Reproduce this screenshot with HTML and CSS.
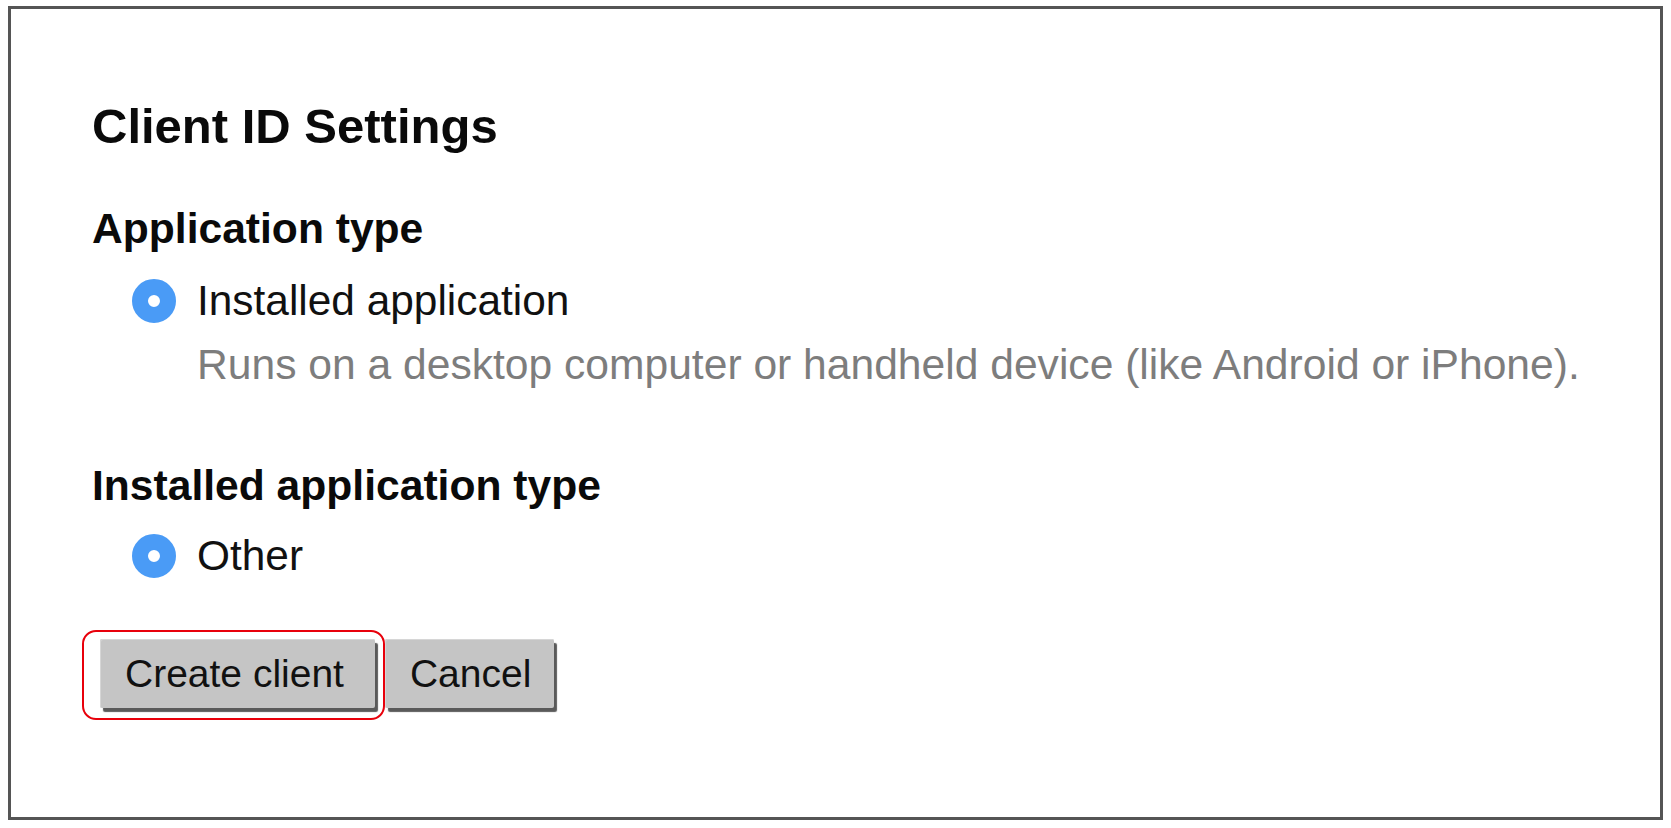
FILE: index.html
```html
<!DOCTYPE html>
<html>
<head>
<meta charset="utf-8">
<link rel="stylesheet" href="styles.css">
</head>
<body>
<div class="frame">
  <h1 class="title">Client ID Settings</h1>
  <h2 class="section">Application type</h2>
  <div class="option">
    <span class="radio"></span>
    <span class="option-label">Installed application</span>
  </div>
  <div class="option-desc">Runs on a desktop computer or handheld device (like Android or iPhone).</div>
  <h2 class="section section-second">Installed application type</h2>
  <div class="option option-other">
    <span class="radio"></span>
    <span class="option-label">Other</span>
  </div>
  <div class="actions">
    <div class="highlight">
      <button class="btn btn-create" type="button">Create client</button>
    </div>
    <button class="btn btn-cancel" type="button">Cancel</button>
  </div>
</div>
</body>
</html>
```

FILE: styles.css
```css
html, body {
  margin: 0;
  padding: 0;
  background: #ffffff;
}

body {
  font-family: "Liberation Sans", Arial, Helvetica, sans-serif;
  color: #111;
}

.frame {
  box-sizing: border-box;
  margin: 6px 0 0 8px;
  width: 1655px;
  height: 814px;
  border: 3px solid #555;
  padding: 89px 0 0 81px;
  background: #fff;
}

.title {
  margin: 0;
  font-size: 49px;
  line-height: 56px;
  font-weight: bold;
  color: #0a0a0a;
}

.section {
  margin: 50px 0 0 0;
  font-size: 42.6px;
  line-height: 48px;
  font-weight: bold;
  color: #0a0a0a;
}

.section-second {
  margin-top: 73px;
}

.option {
  display: flex;
  align-items: center;
  margin: 25px 0 0 40px;
  height: 48px;
}

.option-other {
  margin-top: 23px;
}

.radio {
  box-sizing: border-box;
  width: 44px;
  height: 44px;
  border-radius: 50%;
  border: 16px solid #4a9bf6;
  background: #fff;
  flex: 0 0 auto;
  margin-right: 21px;
}

.option-label {
  font-size: 42.4px;
  line-height: 48px;
  color: #111;
}

.option-desc {
  margin: 15px 0 0 105px;
  font-size: 42.6px;
  line-height: 48px;
  color: #7d7d7d;
}

.actions {
  display: flex;
  align-items: flex-start;
  margin: 50px 0 0 -10px;
}

.highlight {
  border: 2px solid #e8000b;
  border-radius: 14px;
  padding: 7px 3px 5px 16px;
}

.btn {
  font-family: "Liberation Sans", Arial, Helvetica, sans-serif;
  font-size: 39px;
  line-height: 44px;
  height: 69px;
  padding: 0 23px 0 25px;
  color: #111;
  background: #c5c5c5;
  border: 0;
  border-radius: 2px;
  box-shadow: 3px 4px 1px #5a5a5a, inset 1px 1px 0 #d6d6d6;
  margin: 0 5px 5px 0;
}

.btn-create {
  padding-right: 31px;
}

.actions > .btn-cancel {
  margin: 9px 0 0 0;
}
```
